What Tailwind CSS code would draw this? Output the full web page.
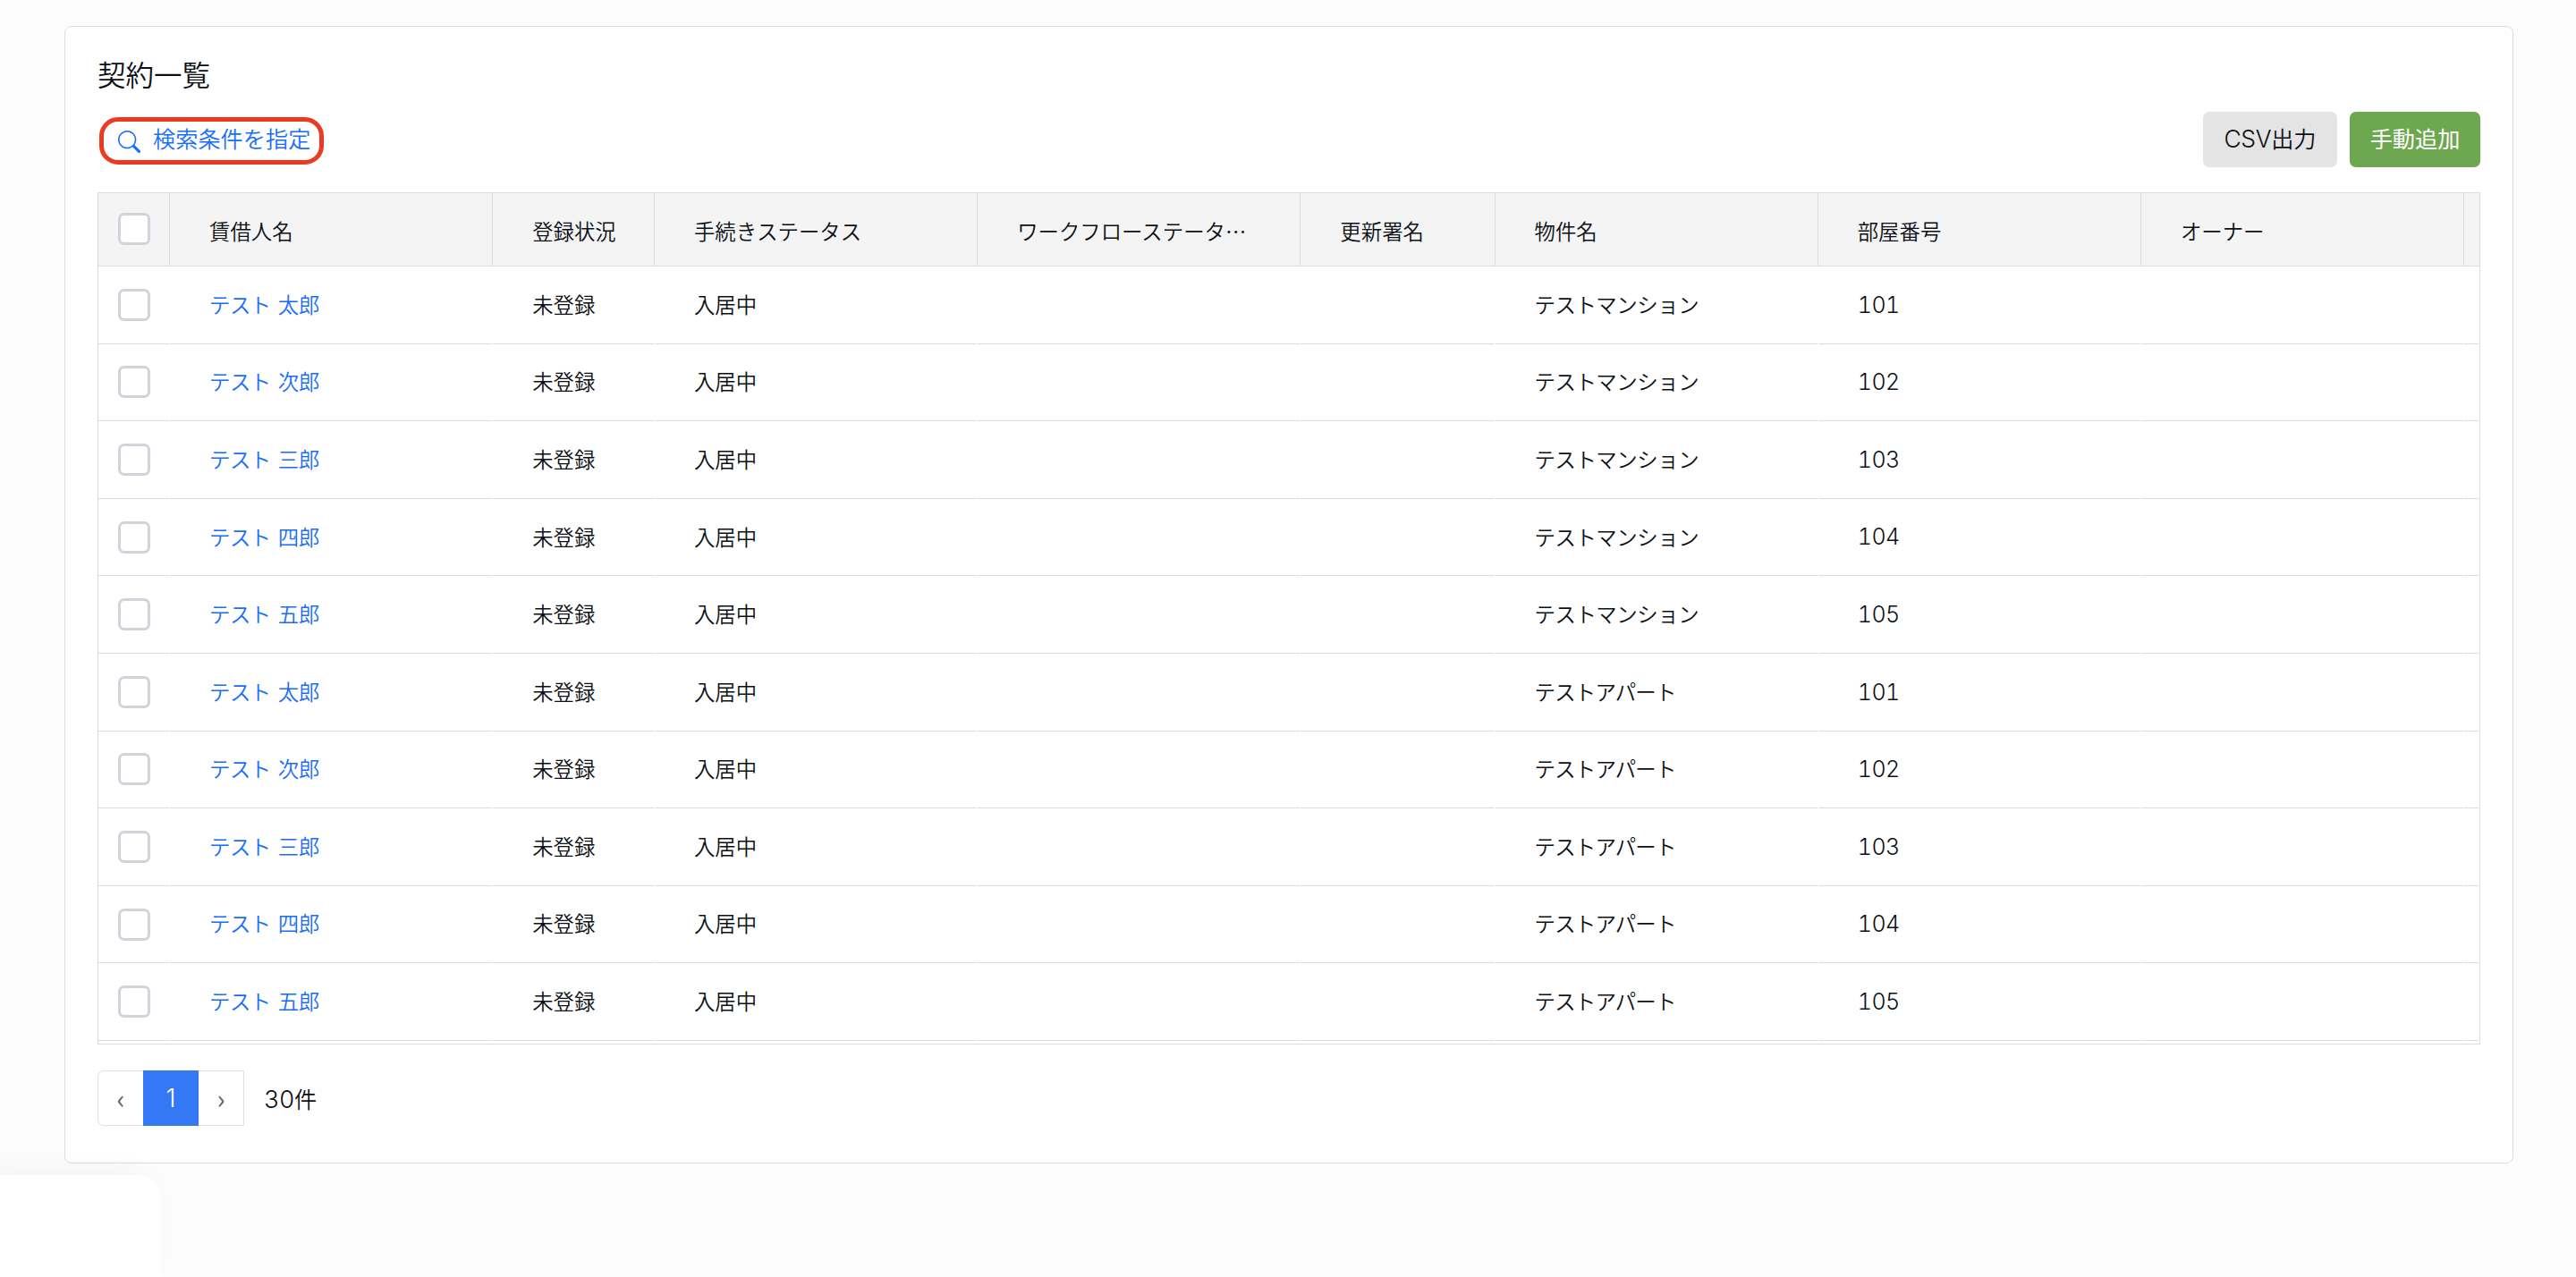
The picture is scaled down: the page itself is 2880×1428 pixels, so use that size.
<!DOCTYPE html>
<html lang="ja">
<head>
<meta charset="utf-8">
<title>契約一覧</title>
<script src="https://cdn.jsdelivr.net/npm/@tailwindcss/browser@4"></script>
</head>
<body class="relative h-[1428px] overflow-hidden bg-[#fcfcfc] pl-[72px] pt-[29px] font-['Noto_Sans_CJK_JP',sans-serif] font-[350] text-[#0c1014]">
<main class="h-[1272px] w-[2738px] rounded-[8px] border border-[#dcdcdd] bg-white px-[36px]">
  <h1 class="mt-[29px] h-[47px] text-[31.5px] leading-[47px]">契約一覧</h1>
  <div class="mt-[19px] flex h-[62px] justify-between">
    <button class="ml-[2px] mt-[6px] flex h-[53px] w-[251px] items-center rounded-[21px] border-5 border-[#eb3a22] pl-[16px] text-[25.2px] text-[#1a6dfa]">
      <svg class="mt-[2px] size-[25px]" viewBox="0 0 16 16" fill="currentColor"><path d="M11.742 10.344a6.5 6.5 0 1 0-1.397 1.398h-.001c.03.04.062.078.098.115l3.85 3.85a1 1 0 0 0 1.415-1.414l-3.85-3.85a1 1 0 0 0-.115-.1zM12 6.5a5.5 5.5 0 1 1-11 0 5.5 5.5 0 0 1 11 0"/></svg>
      <span class="-mt-[6px] ml-[14px] whitespace-nowrap">検索条件を指定</span>
    </button>
    <div class="flex gap-[14px] text-[25.2px]">
      <button class="flex h-[62px] w-[150px] items-center justify-center rounded-[7px] bg-[#e4e4e4] pb-[2px]"><span class="pt-[1px] font-['Inter'] text-[26.5px] font-light tracking-[-0.4px]">CSV</span>出力</button>
      <button class="h-[62px] w-[146px] rounded-[7px] bg-[#6da750] pb-[2px] font-normal text-white">手動追加</button>
    </div>
  </div>
  <div id="grid" class="mt-[28px] h-[953px] w-[2664px] border border-[#dadde0] text-[23.4px]"></div>
  <nav class="mt-[29px] flex h-[62px] items-center">
    <span class="flex h-[62px] w-[51px] items-center justify-center rounded-l-[7px] border border-r-0 border-[#dee2e6] pb-[2px] text-[30px] font-normal text-[#5c656d]">‹</span>
    <span class="flex h-[62px] w-[62px] items-center justify-center bg-[#3478f6] font-['Inter'] text-[28px] font-light text-white">1</span>
    <span class="flex h-[62px] w-[51px] items-center justify-center border border-l-0 border-[#dee2e6] pb-[2px] text-[30px] font-normal text-[#5c656d]">›</span>
    <span class="ml-[22px] flex items-center pt-[2px] text-[25.2px]"><span class="pt-[2px] font-['Inter'] text-[27px] font-light tabular-nums tracking-[-0.5px]">30</span>件</span>
  </nav>
</main>
<div class="absolute left-[-20px] top-[1314px] h-[140px] w-[200px] rounded-[24px] bg-white shadow-[-8px_-10px_40px_-14px_rgba(0,0,0,0.06)]"></div>
<script>
const cols = 'grid grid-cols-[80px_361.2px_180.8px_361.2px_361.2px_217.2px_361.2px_361.2px_361.2px_16.8px]';
const box = '<span class="block size-[36px] rounded-[7px] border-3 border-[#ced4da] bg-white"></span>';
const heads = ['賃借人名','登録状況','手続きステータス','ワークフローステータ⋯','更新署名','物件名','部屋番号','オーナー',''];
let h = `<div class="${cols} h-[82px] border-b border-[#dadde0] bg-[#f4f4f4]"><div class="flex items-center justify-center border-r pb-[1px] border-[#dadde0]">${box}</div>`
 + heads.map((t, i) => `<div class="flex items-center whitespace-nowrap ${i < 8 ? 'border-r pl-[44px] pt-[4px]' : ''} border-[#dadde0]">${t}</div>`).join('') + '</div>';
const names = ['太郎','次郎','三郎','四郎','五郎'];
for (let r = 0; r < 10; r++) {
  const building = r < 5 ? '<span class="tracking-[-0.45px]">テストマンション</span>' : '<span class="tracking-[-0.75px]">テストアパート</span>';
  const cells = [`<span class="text-[#1a6dfa]"><span class="tracking-[-0.5px]">テスト</span><span class="ml-[8px]">${names[r % 5]}</span></span>`,'未登録','入居中','','', building, `<span class="pt-[2px] font-['Inter'] text-[25px] font-light tabular-nums tracking-[-0.5px]">${101 + r % 5}</span>`,'',''];
  h += `<div class="${cols} h-[86.6px]"><div class="mr-[1px] flex items-center justify-center border-b border-[#dadde0]">${box}</div>`
   + cells.map((t, i) => `<div class="mr-[1px] flex items-center border-b border-[#dadde0] ${i < 8 ? 'pb-[1px] pl-[44px]' : ''}">${t}</div>`).join('') + '</div>';
}
document.getElementById('grid').innerHTML = h;
</script>
</body>
</html>
